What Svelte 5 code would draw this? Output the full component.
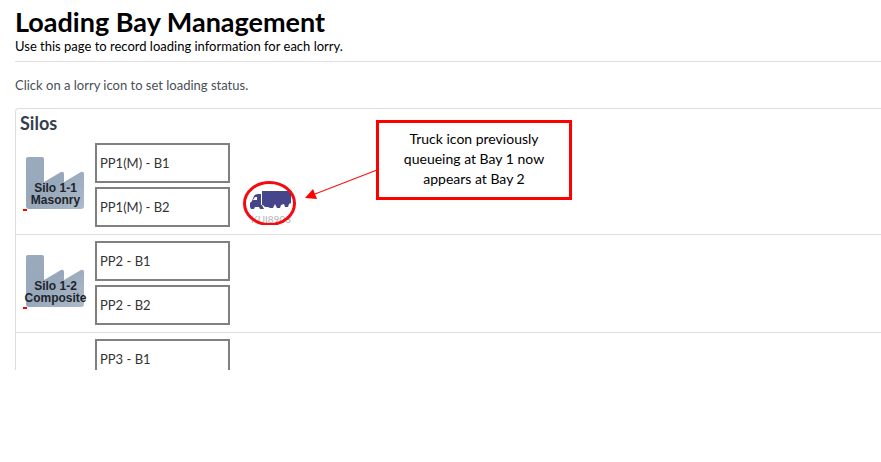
<script>
  const silos = [
    { name: ['Silo 1-1', 'Masonry'], bays: ['PP1(M) - B1', 'PP1(M) - B2'], lorry: 'KUI8903' },
    { name: ['Silo 1-2', 'Composite'], bays: ['PP2 - B1', 'PP2 - B2'] },
    { name: null, bays: ['PP3 - B1'] },
  ];
</script>

<main>
  <header>
    <h1>Loading Bay Management</h1>
    <p>Use this page to record loading information for each lorry.</p>
  </header>
  <p class="hint">Click on a lorry icon to set loading status.</p>

  <section class="panel">
    <h2>Silos</h2>
    {#each silos as silo}
      <div class="row" class:cut={!silo.name}>
        <div class="silo">
          {#if silo.name}
            <svg class="factory" viewBox="0 0 58 52" aria-hidden="true">
              <defs>
                <linearGradient id="steel" x1="0" y1="0" x2="1" y2="1">
                  <stop offset="0" stop-color="#9aabbd" />
                  <stop offset="0.5" stop-color="#97a8ba" />
                  <stop offset="1" stop-color="#adbbc9" />
                </linearGradient>
              </defs>
              <path fill="url(#steel)" d="M2 0H16Q18 0 18 2V25L35 15Q38 14 38 17V25L55 15Q58 14 58 17V49Q58 52 55 52H3Q0 52 0 49V2Q0 0 2 0Z" />
            </svg>
            <div class="label">
              <span>{silo.name[0]}</span>
              <span>{silo.name[1]}</span>
            </div>
            <i class="level"></i>
          {/if}
        </div>
        <div class="bays">
          {#each silo.bays as bay}
            <div class="bay">{bay}</div>
          {/each}
        </div>
        {#if silo.lorry}
          <button class="lorry" aria-label="Set loading status">
            <svg viewBox="0 0 42 20" aria-hidden="true">
              <path fill="#46458c" d="M12 0H41V12L39 13L38 16H35L34 13L31 14L30 17H27L25 13L23 17H20L18 16H15L13 14H12Z" />
              <path fill="#46458c" d="M4 5Q5 3 8 3H11V14H12L14 18H10L9 16H5L4 18H1L0 16V12L2 10Z" />
              <path fill="#fff" d="M5 6H7V9H3Z" />
            </svg>
            <span>{silo.lorry}</span>
          </button>
        {/if}
      </div>
    {/each}
  </section>

  <svg class="marks" viewBox="0 0 140 60" aria-hidden="true">
    <ellipse cx="29.5" cy="38.5" rx="25" ry="21" fill="none" stroke="#f40b10" stroke-width="3" />
    <path d="M137 5L75 29" stroke="#f11" stroke-width="1.2" />
    <path d="M65 33L73 24L77 34Z" fill="#f00" />
  </svg>
  <aside>Truck icon previously queueing at Bay 1 now appears at Bay 2</aside>
</main>

<style>
  :global(body) { background: #fff; }
  main {
    position: relative;
    padding: 5px 0 0 15px;
    font: 13px/16px Lato, sans-serif;
    font-variant-ligatures: none;
    color: #000;
  }
  h1, h2, p { margin: 0; }
  header { padding-bottom: 7px; border-bottom: 1px solid #ddd; }
  h1 { font-size: 27px; line-height: 33px; font-weight: 700; }
  .hint { padding: 15px 0; color: #474f58; }
  .panel {
    border: 1px solid #ddd;
    border-width: 1px 0 0 1px;
    border-top-left-radius: 4px;
  }
  h2 { padding: 2px 0 2px 4px; font-size: 18px; line-height: 24px; color: #34404d; }
  .row { display: flex; padding: 6px 0 7px 7px; border-bottom: 1px solid #ddd; }
  .cut { height: 31px; padding-bottom: 0; border: 0; overflow: hidden; }
  .silo { position: relative; width: 72px; flex: none; }
  .factory { display: block; width: 58px; height: 52px; margin: 14px 0 0 3px; }
  .label {
    position: absolute;
    top: 39px;
    left: 0;
    width: 65px;
    text-align: center;
    font: bold 12px/12px "Liberation Sans", Arial, sans-serif;
    color: #20242a;
  }
  .label span { display: block; }
  .level { position: absolute; top: 66px; left: 0; width: 4px; height: 2px; background: #f00; }
  .bays { display: flex; flex-direction: column; gap: 4px; width: 135px; flex: none; }
  .bay {
    box-sizing: border-box;
    height: 40px;
    padding-left: 3px;
    border: 2px solid #808080;
    line-height: 36px;
    color: #333;
  }
  .lorry {
    align-self: flex-end;
    width: 42px;
    margin: 0 0 3px 20px;
    padding: 0;
    border: 0;
    background: none;
    font: 10px/10px Lato, sans-serif;
    color: #b4b4b4;
  }
  .lorry svg { display: block; width: 42px; height: 20px; margin-bottom: 3px; }
  .lorry span { display: block; height: 10px; }
  .marks { position: absolute; left: 240px; top: 165px; width: 140px; height: 60px; }
  aside {
    position: absolute;
    left: 376px;
    top: 120px;
    box-sizing: border-box;
    width: 196px;
    padding: 6px 20px 8px;
    border: 3px solid #f00;
    background: #fff;
    text-align: center;
    font-size: 14px;
    line-height: 20px;
  }
</style>
